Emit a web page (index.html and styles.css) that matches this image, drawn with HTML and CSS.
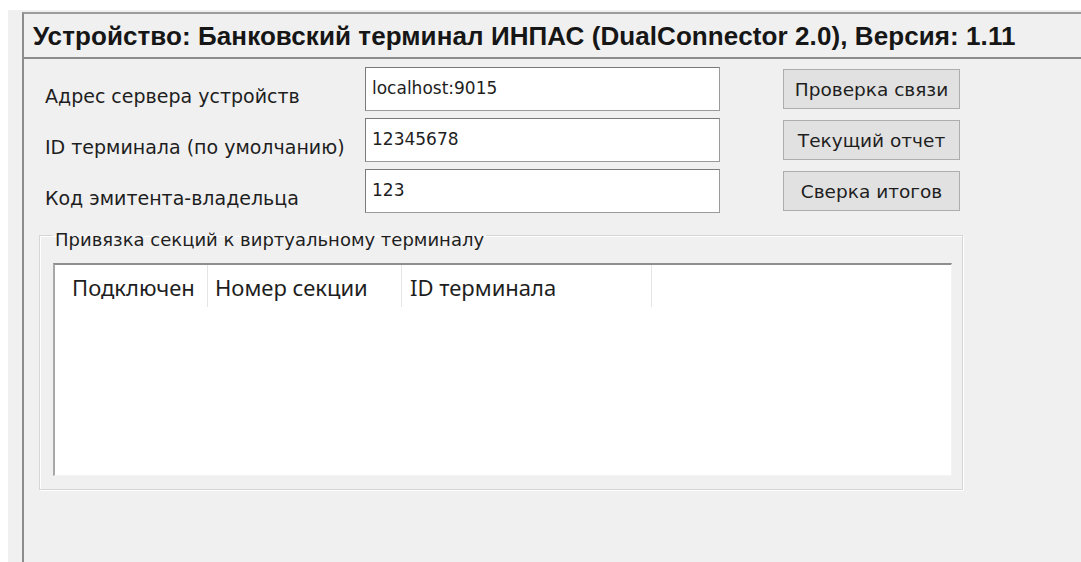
FILE: index.html
```html
<!DOCTYPE html>
<html lang="ru">
<head>
<meta charset="utf-8">
<title>Настройки устройства</title>
<link rel="stylesheet" href="styles.css">
</head>
<body>
<div class="window">
  <div class="frame">
    <div class="title">Устройство: Банковский терминал ИНПАС (DualConnector 2.0), Версия: 1.11</div>
    <div class="settings">
      <label class="label" for="srv">Адрес сервера устройств</label>
      <input class="field" id="srv" type="text" value="localhost:9015">
      <button class="btn" type="button">Проверка связи</button>

      <label class="label" for="tid">ID терминала (по умолчанию)</label>
      <input class="field" id="tid" type="text" value="12345678">
      <button class="btn" type="button">Текущий отчет</button>

      <label class="label" for="own">Код эмитента-владельца</label>
      <input class="field" id="own" type="text" value="123">
      <button class="btn" type="button">Сверка итогов</button>
    </div>
    <fieldset class="group">
      <legend class="group-caption">Привязка секций к виртуальному терминалу</legend>
      <div class="listview">
        <div class="list-head">
          <div class="col col-conn">Подключен</div>
          <div class="col col-sec">Номер секции</div>
          <div class="col col-tid">ID терминала</div>
        </div>
      </div>
    </fieldset>
  </div>
</div>
</body>
</html>
```

FILE: styles.css
```css
html, body {
  margin: 0;
  padding: 0;
  background: #ffffff;
  height: 100%;
  overflow: hidden;
}

.window {
  margin: 10px 0 0 8px;
  padding: 2px 0 0 14px;
  background: #f0f0f0;
  height: 100%;
  box-sizing: border-box;
}

.frame {
  border-left: 2px solid #8c8c8c;
  border-top: 2px solid #9c9c9c;
  height: 100%;
}

.title {
  height: 43px;
  line-height: 44px;
  padding-left: 9px;
  border-bottom: 2px solid #8c8c8c;
  font-family: "Liberation Sans", Arial, sans-serif;
  font-weight: bold;
  font-size: 26px;
  letter-spacing: 0.08px;
  color: #161616;
  white-space: nowrap;
}

.settings {
  display: grid;
  grid-template-columns: 320px 355px 177px;
  grid-auto-rows: 44px;
  row-gap: 7px;
  padding: 8px 0 0 21px;
  font-family: "DejaVu Sans", Tahoma, sans-serif;
  color: #1e1e1e;
}

.label {
  align-self: start;
  padding-top: 18px;
  font-size: 19px;
  line-height: 22px;
  white-space: nowrap;
}

.field {
  box-sizing: border-box;
  height: 44px;
  margin: 0;
  padding: 0 6px 2px;
  border: 1px solid #7a7a7a;
  border-right-color: #9a9a9a;
  border-bottom-color: #9a9a9a;
  background: #ffffff;
  font-family: inherit;
  font-size: 17px;
  color: #1e1e1e;
}

.btn {
  box-sizing: border-box;
  height: 40px;
  margin: 2px 0 0 63px;
  width: 177px;
  border: 1px solid #adadad;
  background: #e1e1e1;
  font-family: inherit;
  font-size: 18.5px;
  color: #1e1e1e;
  padding: 0;
}

.group {
  margin: 7px 0 0 15px;
  width: 924px;
  box-sizing: border-box;
  height: 270px;
  padding: 0 10px 12px 13px;
  border: 1px solid #d6d6d6;
  box-shadow: inset 1px 1px 0 #ffffff, 1px 1px 0 #ffffff;
}

.group-caption {
  margin-left: 0;
  padding: 10px 2px 0;
  font-family: "DejaVu Sans", Tahoma, sans-serif;
  font-size: 18px;
  line-height: 20px;
  color: #1e1e1e;
}

.listview {
  margin-top: 13px;
  height: 213px;
  background: #ffffff;
  border-top: 2px solid #8f8f8f;
  border-left: 2px solid #a8a8a8;
  border-right: 1px solid #f4f4f4;
  border-bottom: 1px solid #f4f4f4;
  box-sizing: border-box;
}

.list-head {
  display: flex;
  height: 42px;
  font-family: "Noto Sans", "Open Sans", sans-serif;
  font-size: 22px;
  color: #1e1e1e;
}

.col {
  box-sizing: border-box;
  display: flex;
  align-items: center;
  padding-top: 1px;
  border-right: 1px solid #e5e5e5;
  white-space: nowrap;
}

.col-conn { width: 153px; padding-left: 17px; }
.col-sec { width: 194px; padding-left: 7px; }
.col-tid { width: 250px; padding-left: 8px; }
```
